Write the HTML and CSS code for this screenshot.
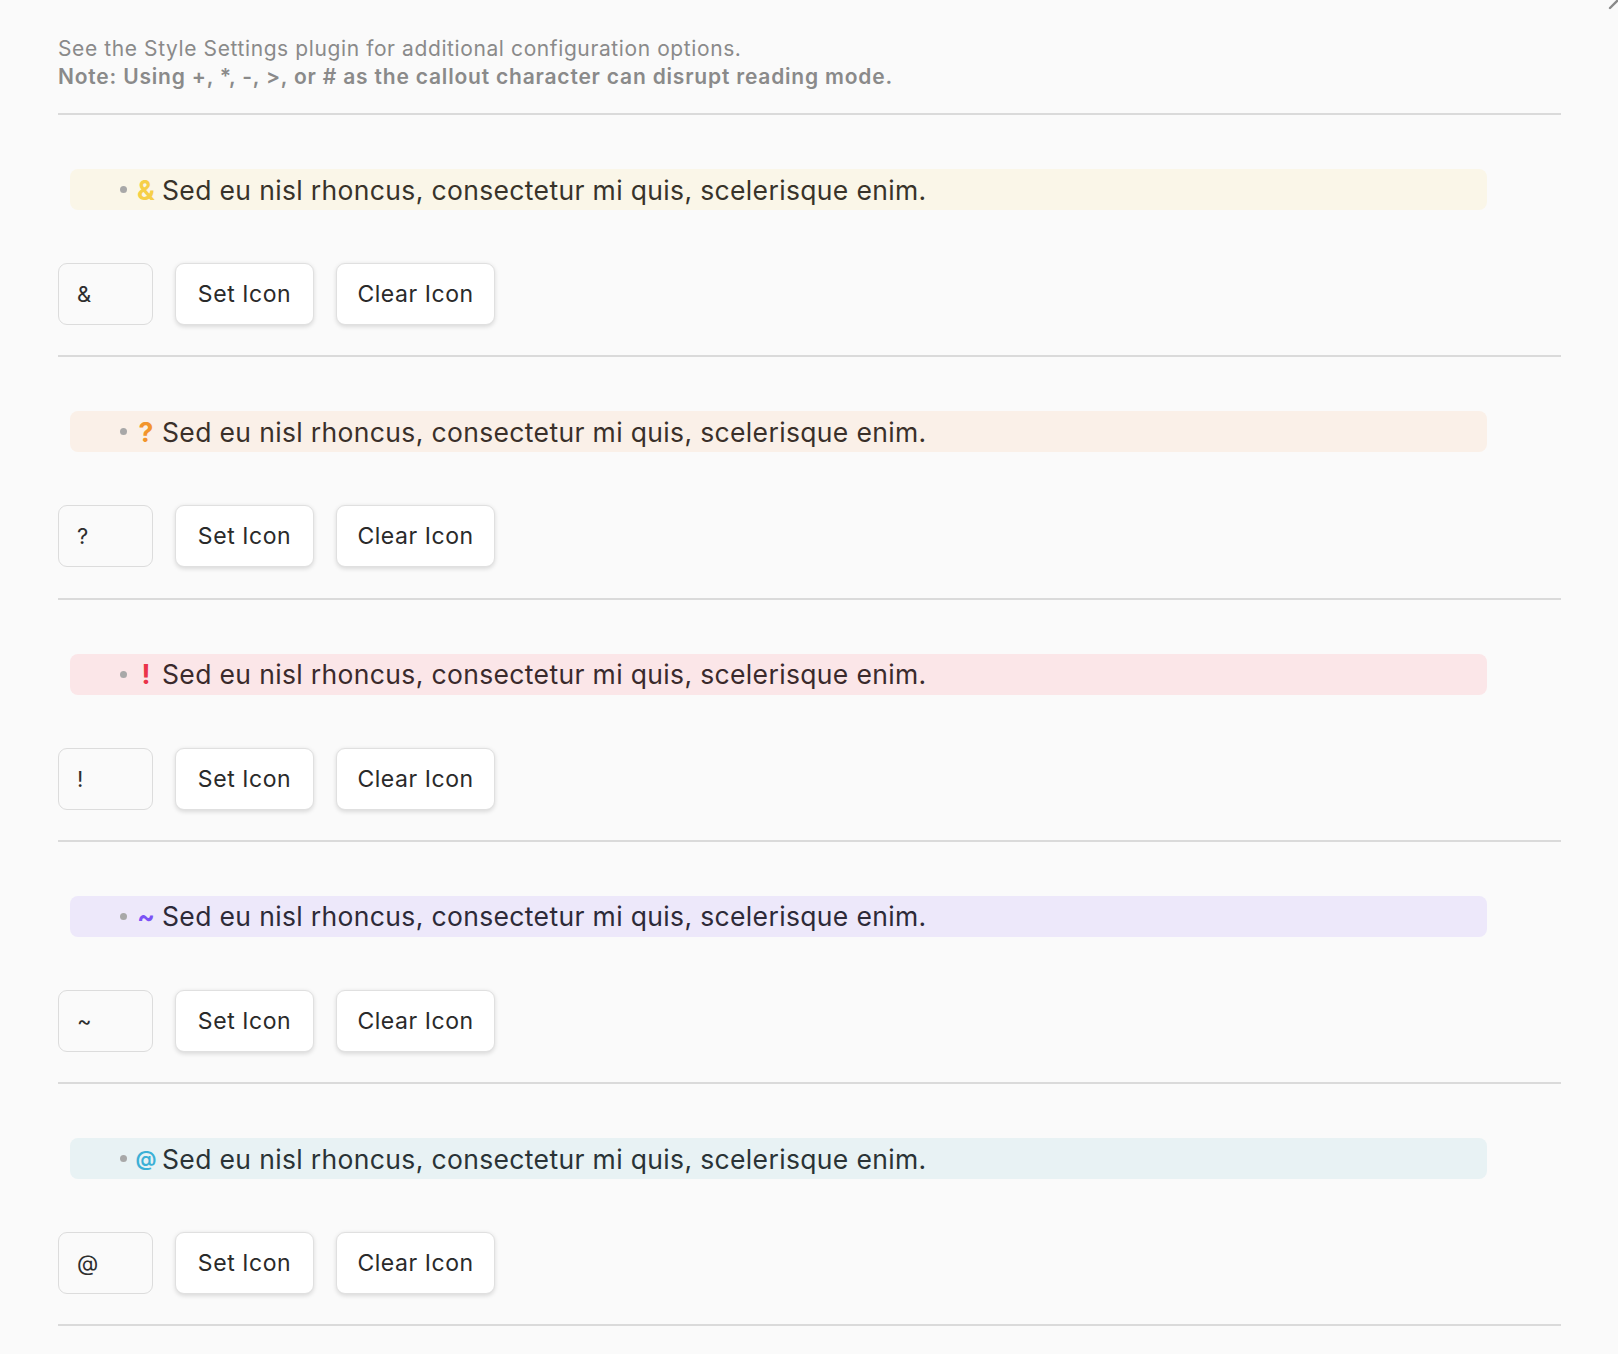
FILE: index.html
```html
<!DOCTYPE html>
<html lang="en">
<head>
<meta charset="utf-8">
<title>Callout icons</title>
<link rel="stylesheet" href="styles.css">
</head>
<body>
<div class="close-mark"><svg width="24" height="24" viewBox="0 0 24 24"><path d="M4 20 L20 4 M4 4 L20 20" stroke="#8a8a8a" stroke-width="2.4" stroke-linecap="round" fill="none"/></svg></div>
<main class="panel">
  <header class="intro">
    <p class="intro-line">See the Style Settings plugin for additional configuration options.</p>
    <p class="intro-line intro-strong">Note: Using +, *, -, &gt;, or # as the callout character can disrupt reading mode.</p>
  </header>

  <section class="item">
    <div class="callout callout-yellow"><span class="dot"></span><span class="glyph">&amp;</span><span class="callout-text">Sed eu nisl rhoncus, consectetur mi quis, scelerisque enim.</span></div>
    <div class="controls"><div class="field">&amp;</div><button class="btn btn-set">Set Icon</button><button class="btn btn-clear">Clear Icon</button></div>
  </section>

  <section class="item">
    <div class="callout callout-orange"><span class="dot"></span><span class="glyph">?</span><span class="callout-text">Sed eu nisl rhoncus, consectetur mi quis, scelerisque enim.</span></div>
    <div class="controls"><div class="field">?</div><button class="btn btn-set">Set Icon</button><button class="btn btn-clear">Clear Icon</button></div>
  </section>

  <section class="item">
    <div class="callout callout-red"><span class="dot"></span><span class="glyph">!</span><span class="callout-text">Sed eu nisl rhoncus, consectetur mi quis, scelerisque enim.</span></div>
    <div class="controls"><div class="field">!</div><button class="btn btn-set">Set Icon</button><button class="btn btn-clear">Clear Icon</button></div>
  </section>

  <section class="item">
    <div class="callout callout-purple"><span class="dot"></span><span class="glyph">~</span><span class="callout-text">Sed eu nisl rhoncus, consectetur mi quis, scelerisque enim.</span></div>
    <div class="controls"><div class="field">~</div><button class="btn btn-set">Set Icon</button><button class="btn btn-clear">Clear Icon</button></div>
  </section>

  <section class="item">
    <div class="callout callout-cyan"><span class="dot"></span><span class="glyph glyph-at">@</span><span class="callout-text">Sed eu nisl rhoncus, consectetur mi quis, scelerisque enim.</span></div>
    <div class="controls"><div class="field">@</div><button class="btn btn-set">Set Icon</button><button class="btn btn-clear">Clear Icon</button></div>
  </section>
</main>
</body>
</html>
```

FILE: styles.css
```css
* { box-sizing: border-box; }

html, body {
  margin: 0;
  padding: 0;
  background: #fafafa;
}

body {
  font-family: Inter, "Noto Sans", "Liberation Sans", sans-serif;
  color: #2e2e2e;
  width: 1618px;
  min-height: 1354px;
  overflow: hidden;
  position: relative;
}

.close-mark {
  position: absolute;
  top: -12px;
  right: -12px;
  width: 24px;
  height: 24px;
}

.panel {
  margin-left: 58px;
  width: 1503px;
}

.intro {
  padding-top: 35px;
  padding-bottom: 22px;
  border-bottom: 2px solid #dadada;
}

.intro-line {
  margin: 0;
  font-size: 21px;
  line-height: 28px;
  color: #8a8a8a;
  letter-spacing: 0.6px;
}

.intro-strong {
  font-weight: 600;
  letter-spacing: 0.8px;
}

.item {
  padding: 54px 0 30.3px;
  border-bottom: 2px solid #dadada;
}

.callout {
  margin-left: 12px;
  width: 1417px;
  height: 41px;
  border-radius: 8px;
  display: flex;
  align-items: center;
  padding-left: 50px;
  font-size: 26.5px;
}

.dot {
  width: 7px;
  height: 7px;
  border-radius: 50%;
  background: #a8a8a8;
  flex: none;
  margin-right: 10px;
}

.glyph {
  flex: none;
  width: 18px;
  display: inline-flex;
  justify-content: center;
  font-weight: 700;
  margin-right: 7px;
}

.glyph-at {
  font-size: 21px;
  font-weight: 600;
}

.callout-text {
  letter-spacing: 0.35px;
}

.callout-yellow { background: #faf6e8; color: #38332a; }
.callout-yellow .glyph { color: #f6cf48; }
.callout-orange { background: #faf0e8; color: #3a302a; }
.callout-orange .glyph { color: #f2952c; }
.callout-red { background: #fbe6e8; color: #3a2a2c; }
.callout-red .glyph { color: #ea3449; }
.callout-purple { background: #ede8fa; color: #2d2a38; }
.callout-purple .glyph { color: #7b52f5; }
.callout-cyan { background: #e8f2f4; color: #2a3336; }
.callout-cyan .glyph { color: #3cb0d6; }

.controls {
  margin-top: 53px;
  display: flex;
  gap: 22px;
  height: 62px;
}

.field {
  width: 95px;
  height: 62px;
  border: 1.5px solid #dcdcdc;
  border-radius: 9px;
  display: flex;
  align-items: center;
  padding-left: 18px;
  font-size: 22px;
  color: #2e2e2e;
}

.btn {
  height: 62px;
  border: 1px solid #e0e0e0;
  border-radius: 9px;
  background: #ffffff;
  box-shadow: 0 1.5px 4px rgba(0, 0, 0, 0.13);
  font-family: Inter, "Noto Sans", "Liberation Sans", sans-serif;
  font-size: 23px;
  letter-spacing: 0.55px;
  color: #2a2a2a;
  padding: 0;
  cursor: pointer;
}

.btn-set { width: 139px; }
.btn-clear { width: 159px; }
```
